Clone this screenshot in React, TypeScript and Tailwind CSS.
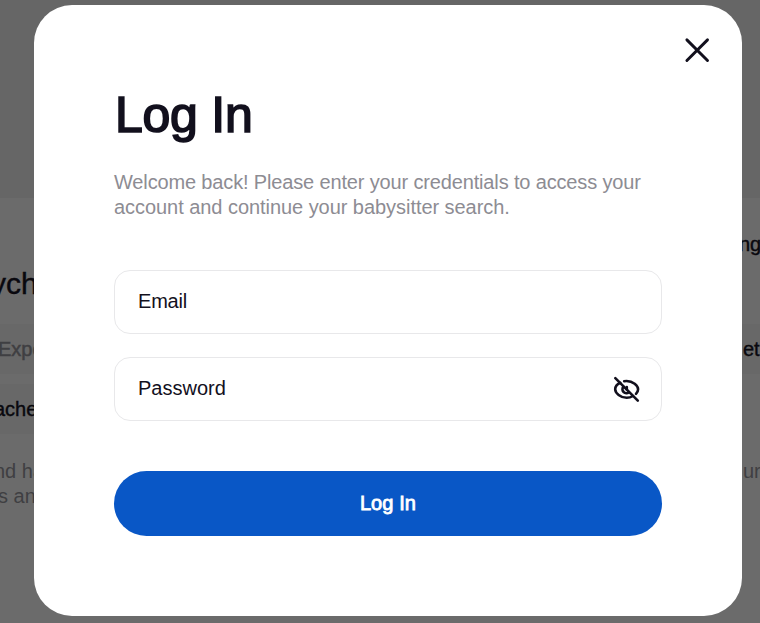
import React, { useState } from "react";

const CloseIcon = () => (
  <svg width="26" height="26" viewBox="0 0 26 26" fill="none" stroke="#12101d" strokeWidth="2.9" strokeLinecap="round">
    <path d="M2.900 2.900 23.500 23.500M23.500 2.900 2.900 23.500" />
  </svg>
);

const EyeOffIcon = () => (
  <svg width="28" height="28" viewBox="0 0 28 28" fill="none" stroke="#12101d" strokeWidth="2.6" strokeLinecap="round" strokeLinejoin="round">
    <path d="M2.300 3.200 24.800 25.700" />
    <path d="M7.300 7.800C4.300 9.200 2.200 12 2.200 14.300c0 3.800 5.300 8.400 11.500 8.400 2.300 0 4.400-.6 6.200-1.700" />
    <path d="M11.200 6.300C12 6.100 12.800 6 13.600 6c6.200 0 11.500 4.700 11.500 8.300 0 1.600-.8 3.200-2.100 4.600" />
    <path d="M10.400 11.700a3.900 3.900 0 0 0 5.500 5.500" />
    <path d="M13.800 12v2.500" />
  </svg>
);

function Backdrop() {
  return (
    <div className="grid h-[623px] w-[760px] grid-cols-[34px_1fr_18px] overflow-hidden bg-[#6b6b6b] whitespace-nowrap text-[20px] leading-[25px] text-[#09080e]">
      <div className="col-span-3 h-[198px] bg-[#666666]" />
      <div className="h-[425px] w-[44px] overflow-hidden">
        <div className="ml-[-9px] h-[126px] pt-[68px] text-[30px] leading-[36px] [-webkit-text-stroke:0.4px]">ych</div>
        <div className="h-[50px] bg-[#686868] pt-[13px] text-[#3f3f42] [-webkit-text-stroke:0.5px]">
          <span className="ml-[-2px]">Expe</span>
        </div>
        <div className="mt-[10px] h-[50px] bg-[#686868] pt-[13px] [-webkit-text-stroke:0.4px]">
          <span className="ml-[-6px]">ache</span>
        </div>
        <div className="mt-[25px] text-[#3f3f42]">
          <p className="ml-[-6px]">nd ha</p>
          <p className="ml-[-2px]">s and</p>
        </div>
      </div>
      <div />
      <div className="h-[425px] overflow-hidden">
        <div className="ml-[-3px] h-[126px] pt-[34px] [-webkit-text-stroke:0.4px]">ng</div>
        <div className="h-[50px] bg-[#686868] pt-[13px] pl-px [-webkit-text-stroke:0.4px]">et</div>
        <p className="mt-[85px] pl-px text-[#3f3f42]">ur</p>
      </div>
    </div>
  );
}

export default function App() {
  const [visible, setVisible] = useState(false);
  return (
    <div className="relative h-[623px] w-[760px] overflow-hidden font-['Liberation_Sans',Arial,sans-serif]">
      <Backdrop />
      <div className="absolute inset-0 pt-[5px] pl-[34px]">
        <section className="flex h-[611px] w-[708px] flex-col rounded-[38px] bg-white px-[80px] text-[#12101d]">
          <div className="-mr-[48px] flex h-[85px] shrink-0 items-start justify-end pt-[32px]">
            <button aria-label="Close"><CloseIcon /></button>
          </div>
          <h1 className="h-[80px] pl-px text-[50px] leading-[50px] tracking-[-0.25px] [-webkit-text-stroke:1.7px]">Log In</h1>
          <p className="h-[100px] text-[20px] leading-[25px] whitespace-nowrap text-[#8d8c93]">
            <span className="tracking-[-0.15px]">Welcome back! Please enter your credentials to access your</span>
            <br />
            <span className="tracking-[-0.05px]">account and continue your babysitter search.</span>
          </p>
          <label className="flex h-[64px] items-center rounded-[16px] border border-[#e8e8ea] px-[23px]">
            <span className="pb-[2px] text-[20px] leading-[25px] tracking-[-0.2px]">Email</span>
          </label>
          <div className="mt-[23px] flex h-[64px] items-center justify-between rounded-[16px] border border-[#e8e8ea] pr-[20px] pl-[23px]">
            <span className="pb-[2px] text-[20px] leading-[25px]">Password</span>
            <button aria-label="Toggle password" onClick={() => setVisible(!visible)}><EyeOffIcon /></button>
          </div>
          <button className="mt-[50px] h-[65px] rounded-full bg-[#0957c6] text-[20px] leading-[25px] tracking-[0.1px] text-white [-webkit-text-stroke:0.8px]">Log In</button>
        </section>
      </div>
    </div>
  );
}
